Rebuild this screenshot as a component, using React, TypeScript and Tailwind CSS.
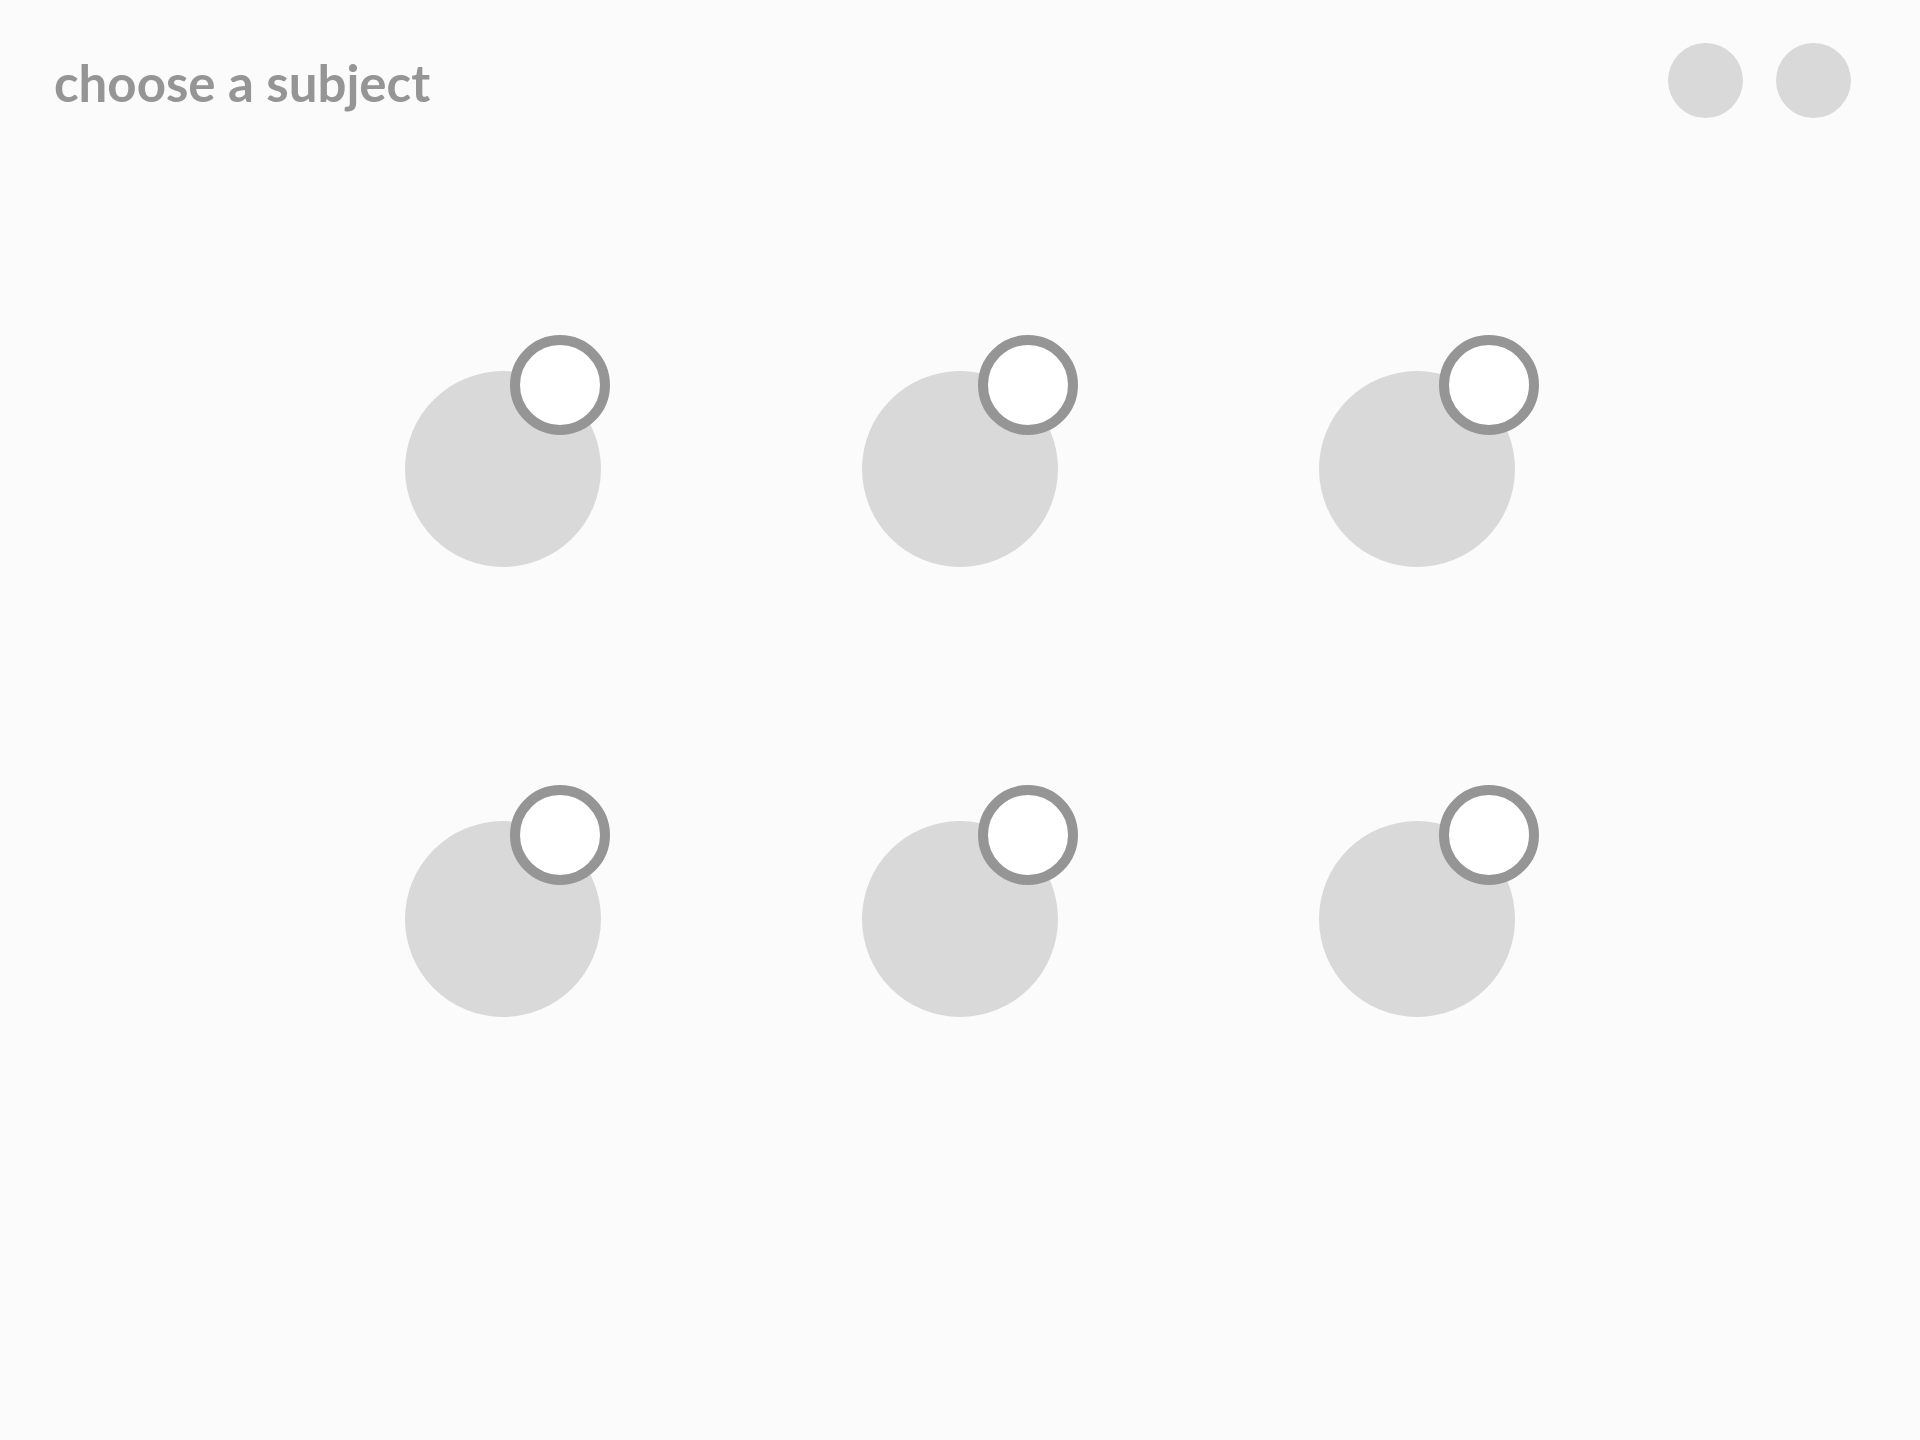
import React from "react";

const badgeLeft = ["left-[105px]", "left-[116px]", "left-[120px]"];

function Item({ col }: { col: number }) {
  return (
    <div className="relative w-[196px] h-[196px]">
      <div className="w-[196px] h-[196px] rounded-full bg-[#d9d9d9]" />
      <div
        className={`absolute top-[-36px] ${badgeLeft[col]} w-[100px] h-[100px] rounded-full border-[10px] border-[#959595] bg-white`}
      />
    </div>
  );
}

export default function App() {
  return (
    <div className="min-h-[1440px] w-full bg-[#fbfbfb]" style={{ fontFamily: "Lato, 'Noto Sans', sans-serif" }}>
      <header className="flex items-start justify-between pt-[43px] pl-[54px] pr-[69px]">
        <h1 className="mt-[10px] text-[51px] leading-[60px] font-bold text-[#959595]" style={{ fontFamily: "Lato, sans-serif" }}>
          choose a subject
        </h1>
        <div className="flex gap-[33px]">
          <div className="w-[75px] h-[75px] rounded-full bg-[#d9d9d9]" />
          <div className="w-[75px] h-[75px] rounded-full bg-[#d9d9d9]" />
        </div>
      </header>
      <main className="mt-[253px] mx-auto w-[1110px] grid grid-cols-3 gap-x-[261px] gap-y-[254px]">
        {[0, 1, 2, 0, 1, 2].map((c, i) => (
          <Item key={i} col={c} />
        ))}
      </main>
    </div>
  );
}
